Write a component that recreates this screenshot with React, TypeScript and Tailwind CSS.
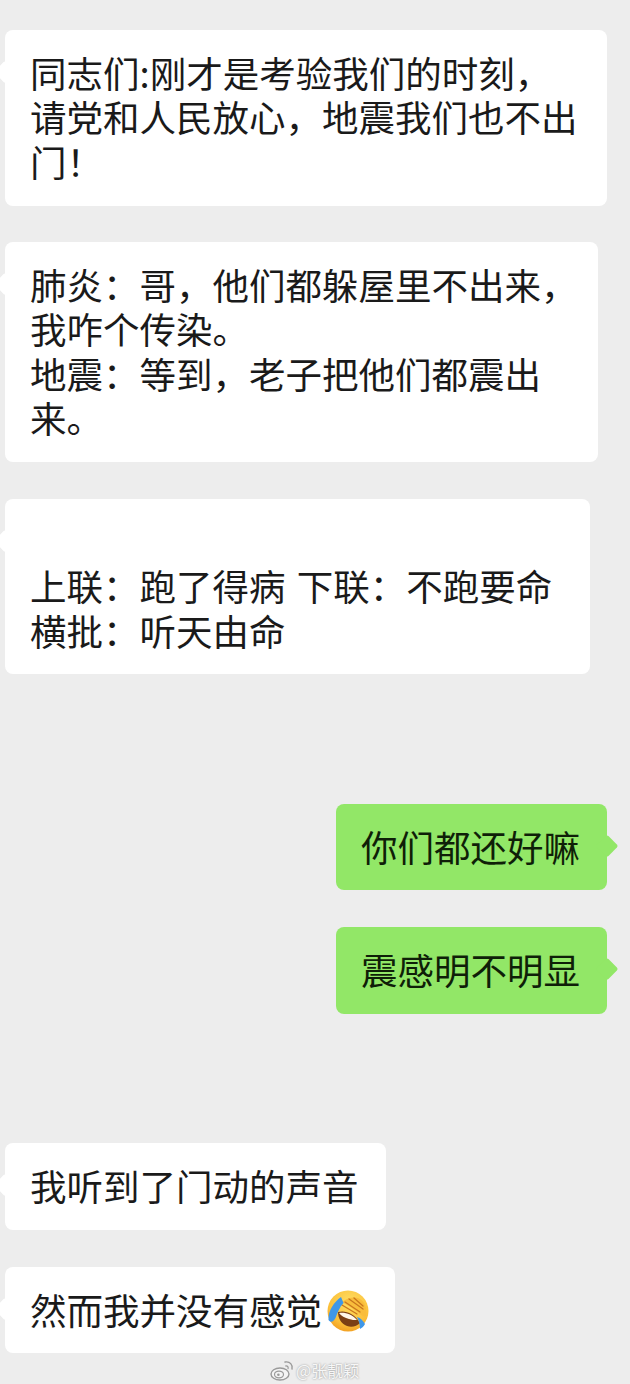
import React from "react";

type BubbleProps = {
  className: string;
  mine?: boolean;
  children: React.ReactNode;
};

const Bubble: React.FC<BubbleProps> = ({ className, mine, children }) => {
  return (
    <div
      className={`relative rounded-[8px] pt-[20.5px] pl-[25px] text-[36.5px] leading-[44.6px] whitespace-nowrap ${
        mine ? "bg-[#92e767] text-[#0f1f08]" : "bg-white text-[#1a1a1a]"
      } ${className}`}
    >
      {/* little arrow on the bubble edge */}
      <span
        className={`absolute top-[34px] w-[16px] h-[16px] rotate-45 rounded-[2px] ${
          mine ? "right-[-8px] bg-[#92e767]" : "left-[-8px] bg-white"
        }`}
      />
      <span className="relative">{children}</span>
    </div>
  );
};

const FacepalmEmoji: React.FC = () => (
  <svg
    width="42"
    height="42"
    viewBox="0 0 42 42"
    className="inline-block ml-[5px] align-[-7px]"
  >
    <defs>
      <radialGradient id="face" cx="55%" cy="30%" r="75%">
        <stop offset="0%" stopColor="#ffdf63" />
        <stop offset="70%" stopColor="#fbbf3a" />
        <stop offset="100%" stopColor="#f09a1e" />
      </radialGradient>
    </defs>
    <circle cx="21" cy="21" r="20.5" fill="url(#face)" />
    {/* mouth */}
    <path d="M11 22c7-2 16 1 22 11-3 3-8 5-13 3-6-2-9-8-9-14z" fill="#7b3f14" />
    <path d="M12 23c6-1 13 1 18 7-3 0-5 0-8-1-4-1-8-3-10-6z" fill="#fff6e8" />
    {/* hand over the eyes */}
    <path
      d="M15 12c5-4 12-6 18-3 5 3 7 9 6 17-2 1-4 0-6-2-5-4-11-8-18-12z"
      fill="#f9bd3c"
    />
    <path
      d="M18 12l15 10M22 9l14 10M27 8l9 8M15 15l15 9"
      stroke="#c9761d"
      strokeWidth="1.3"
      strokeLinecap="round"
    />
    {/* tears */}
    <path d="M14 7C7 12 1 21 1.500 30c2 3 5 2 7-2 2-5 4-11 8-15z" fill="#3f97e8" />
    <path d="M30 27c2 4 3 8 3 12 2-1 4-3 5-5-2-3-4-6-8-7z" fill="#3f97e8" />
  </svg>
);

const WeiboMark: React.FC = () => (
  <svg width="24" height="21" viewBox="0 0 24 21" fill="none">
    <ellipse cx="10" cy="14" rx="9" ry="6" stroke="#9a9a9a" strokeWidth="1.4" fill="#f4f4f4" />
    <ellipse cx="9" cy="14.5" rx="4.5" ry="3.4" stroke="#9a9a9a" strokeWidth="1.2" />
    <circle cx="8.4" cy="14.8" r="1.3" fill="#9a9a9a" />
    <path d="M15 2c5-1 8 3 7 7" stroke="#9a9a9a" strokeWidth="1.4" strokeLinecap="round" />
    <path d="M15.5 6c2-.4 3 .8 2.6 2.6" stroke="#9a9a9a" strokeWidth="1.2" strokeLinecap="round" />
  </svg>
);

export default function App() {
  return (
    <div className="w-[630px] h-[1384px] overflow-hidden bg-[#ededed] font-['Noto_Sans_CJK_SC','Noto_Sans',sans-serif] font-normal">
      <div className="flex flex-col pt-[30px]">
        <Bubble className="ml-[5px] w-[602px] h-[176px]">
          同志们:刚才是考验我们的时刻，
          <br />
          请党和人民放心，地震我们也不出
          <br />门！
        </Bubble>

        <Bubble className="ml-[5px] mt-[36px] w-[593px] h-[220px]">
          肺炎：哥，他们都躲屋里不出来，
          <br />
          我咋个传染。
          <br />
          地震：等到，老子把他们都震出
          <br />
          来。
        </Bubble>

        <Bubble className="ml-[5px] mt-[37px] w-[585px] h-[175px]">
          <br />
          <span className="[word-spacing:3px]">上联：跑了得病 下联：不跑要命</span>
          <br />
          横批：听天由命
        </Bubble>

        <Bubble mine className="ml-[336px] mt-[130px] w-[271px] h-[86px]">
          你们都还好嘛
        </Bubble>

        <Bubble mine className="ml-[336px] mt-[37px] w-[271px] h-[87px]">
          震感明不明显
        </Bubble>

        <Bubble className="ml-[5px] mt-[129px] w-[381px] h-[87px]">
          我听到了门动的声音
        </Bubble>

        <Bubble className="ml-[5px] mt-[37px] w-[390px] h-[86px]">
          然而我并没有感觉
          <FacepalmEmoji />
        </Bubble>

        <div className="flex items-center ml-[270px] mt-[5px] h-[24px] gap-[2px] text-[16px] leading-[20px] text-[#f7f7f7] [text-shadow:0_0_2px_#8a8a8a]">
          <WeiboMark />
          <span>@张靓颖</span>
        </div>
      </div>
    </div>
  );
}
